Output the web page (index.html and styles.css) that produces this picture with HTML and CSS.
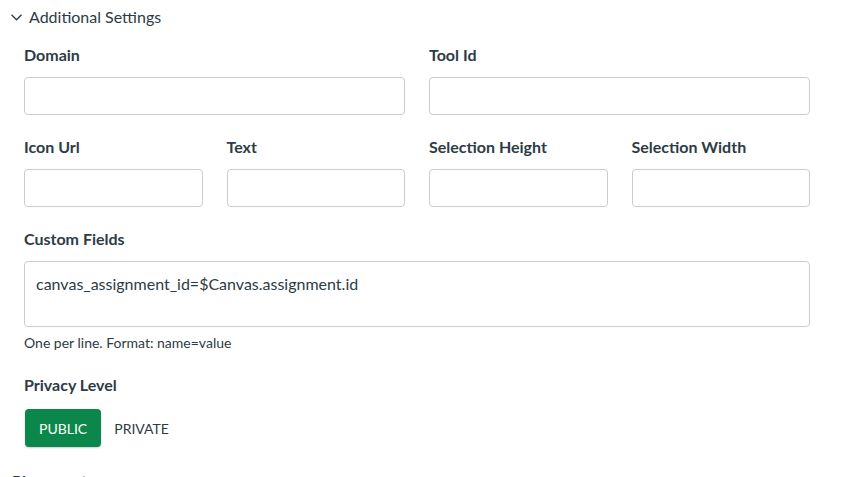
FILE: index.html
```html
<!DOCTYPE html>
<html>
<head>
<meta charset="utf-8">
<link rel="stylesheet" href="styles.css">
</head>
<body>
<div class="page">
  <div class="toggle">
    <svg class="chev" width="11" height="7" viewBox="0 0 11 7"><path d="M0.5 0.8 L5.5 5.8 L10.5 0.8" fill="none" stroke="#2d3b45" stroke-width="1.3"/></svg>
    <span>Additional Settings</span>
  </div>
  <div class="settings">
    <div class="grid two">
      <div class="field"><label class="lbl">Domain</label><input class="inp" type="text"></div>
      <div class="field"><label class="lbl">Tool Id</label><input class="inp" type="text"></div>
    </div>
    <div class="grid four">
      <div class="field"><label class="lbl">Icon Url</label><input class="inp" type="text"></div>
      <div class="field"><label class="lbl">Text</label><input class="inp" type="text"></div>
      <div class="field"><label class="lbl">Selection Height</label><input class="inp" type="text"></div>
      <div class="field"><label class="lbl">Selection Width</label><input class="inp" type="text"></div>
    </div>
    <div class="field custom">
      <label class="lbl">Custom Fields</label>
      <textarea class="area">canvas_assignment_id=$Canvas.assignment.id</textarea>
      <div class="help">One per line. Format: name=value</div>
    </div>
    <div class="field privacy">
      <label class="lbl">Privacy Level</label>
      <div class="seg">
        <button class="opt active">PUBLIC</button>
        <button class="opt">PRIVATE</button>
      </div>
    </div>
  </div>
  <div class="placement">Placements</div>
</div>
</body>
</html>
```
FILE: styles.css
```css
html, body {
  margin: 0;
  padding: 0;
  overflow: hidden;
  background: #ffffff;
}
body {
  font-family: Lato, "Noto Sans", sans-serif;
  color: #2d3b45;
}
.page {
  padding: 5px 32px 0 11px;
}
.toggle {
  display: flex;
  align-items: center;
  gap: 7px;
  font-size: 16px;
  line-height: 24px;
  height: 24px;
}
.chev {
  display: block;
  margin-top: 1px;
}
.settings {
  padding: 14px 0 0 13px;
}
.grid {
  display: grid;
  column-gap: 24px;
  margin-bottom: 20px;
}
.two { grid-template-columns: 1fr 1fr; }
.four { grid-template-columns: 1fr 1fr 1fr 1fr; }
.field {
  display: flex;
  flex-direction: column;
}
.lbl {
  font-size: 16px;
  font-weight: 700;
  line-height: 24px;
  margin-bottom: 10px;
}
.inp {
  box-sizing: border-box;
  height: 38px;
  width: 100%;
  border: 1px solid #c7cdd1;
  border-radius: 4px;
  margin: 0;
  padding: 0 12px;
  font: 16px Lato, sans-serif;
}
.area {
  box-sizing: border-box;
  height: 66px;
  width: 100%;
  border: 1px solid #c7cdd1;
  border-radius: 4px;
  margin: 0;
  padding: 11px 11px;
  font: 16px/21px Lato, sans-serif;
  color: #2d3b45;
  resize: none;
}
.help {
  font-size: 14px;
  line-height: 21px;
  margin-top: 5px;
}
.privacy {
  margin-top: 20px;
}
.privacy .lbl { margin-bottom: 12px; }
.seg {
  display: flex;
  align-items: center;
}
.opt {
  height: 38px;
  border: none;
  background: transparent;
  font: 14px Lato, sans-serif;
  color: #2d3b45;
  padding: 0 13px;
  border-radius: 4px;
  margin: 0;
}
.opt.active {
  margin-left: 1px;
  padding: 0 14px;
  background: #0b874b;
  color: #ffffff;
  box-shadow: 0 1px 2px rgba(0,0,0,0.2);
}
.placement {
  margin-top: 22px;
  font-size: 16px;
  font-weight: 700;
  line-height: 24px;
  padding-left: 1px;
}
```
